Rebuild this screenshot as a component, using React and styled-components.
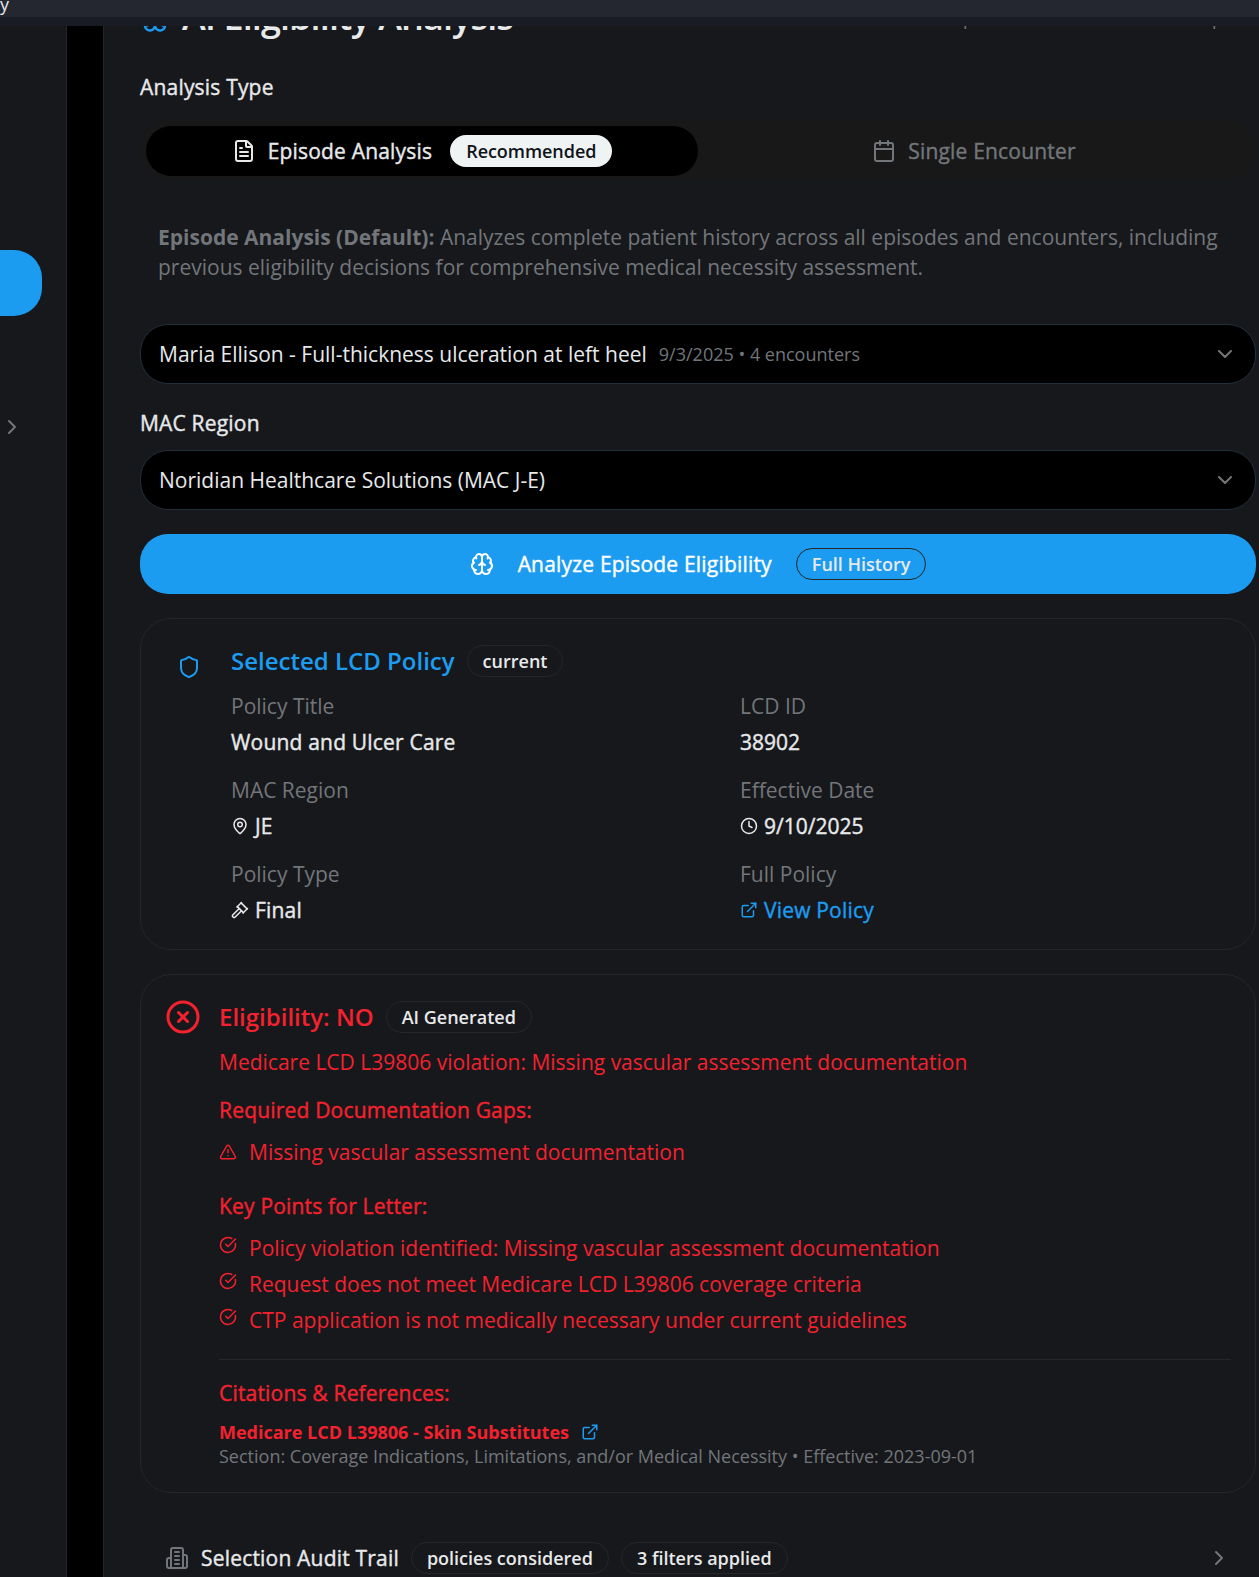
import React from "react";
import styled, { createGlobalStyle, css } from "styled-components";
import {
  Brain,
  FileText,
  Calendar,
  ChevronDown,
  ChevronRight,
  Shield,
  MapPin,
  Clock,
  Gavel,
  ExternalLink,
  CircleX,
  TriangleAlert,
  CircleCheckBig,
} from "lucide-react";

const c = {
  background: "#000000",
  foreground: "#e7e9ea",
  card: "#17181c",
  primary: "#1c9cf0",
  secondary: "#f0f3f4",
  secondaryText: "#0f1419",
  muted: "#181818",
  mutedText: "#72767a",
  border: "#242628",
  input: "#22303c",
  destructive: "#f4212e",
};

// Open Sans is installed without a 500 cut, so the regular cut is thickened.
const medium = css`
  font-weight: 400;
  letter-spacing: ${(p) => (p.$numeric ? 0 : 0.19)}px;
  -webkit-text-stroke: 0.4px currentColor;
`;

const GlobalStyle = createGlobalStyle`
  * { box-sizing: border-box; }
  html, body { margin: 0; background: ${c.background}; }
  body { overflow: hidden; }
  p, h1, h2, h3, ul { margin: 0; padding: 0; font-weight: inherit; font-size: inherit; }
  ul { list-style: none; }
  button { font: inherit; color: inherit; border: 0; background: none; padding: 0; }
  svg { display: block; flex: none; }
`;

const Screen = styled.div`
  display: flex;
  flex-direction: column;
  width: 100vw;
  height: 100vh;
  overflow: hidden;
  color: ${c.foreground};
  font-family: "Open Sans", "Noto Sans", sans-serif;
  font-size: 21px;
  line-height: 30px;
`;

const TitleBar = styled.header`
  display: flex;
  align-items: flex-end;
  flex: none;
  height: 17px;
  padding-bottom: 3px;
  overflow: hidden;
  background: #242730;
  line-height: 20px;
  font-size: 18px;
`;

const ToolStrip = styled.div`
  flex: none;
  height: 9px;
  background: #191c24;
`;

const Body = styled.div`
  display: flex;
  flex: 1;
  min-height: 0;
`;

const Sidebar = styled.aside`
  display: flex;
  flex-direction: column;
  align-items: flex-start;
  flex: none;
  width: 67px;
  padding-top: 224px;
  background: ${c.card};
  border-right: 1px solid ${c.border};
`;

const SidebarItem = styled.button`
  width: 42px;
  height: 66px;
  margin-bottom: 99px;
  border-radius: 0 28px 28px 0;
  background: ${c.primary};
`;

const SidebarToggle = styled.button`
  color: ${c.mutedText};
`;

const Panel = styled.main`
  display: flex;
  flex-direction: column;
  justify-content: flex-end;
  flex: none;
  width: 1189px;
  height: 1551px;
  margin-left: 36px;
  padding: 0 36px 3px;
  background: ${c.card};
  border-left: 1px solid ${c.border};
  overflow: hidden;
`;

const Column = styled.div`
  display: flex;
  flex-direction: column;
  gap: 24px;
  width: 1116px;
`;

const PanelHeader = styled.div`
  display: flex;
  align-items: center;
  gap: 12px;
  height: 50px;
  margin-bottom: 6px;
  color: ${c.primary};
  & > svg { margin-top: 2px; }
`;

const PanelTitle = styled.h1`
  flex: 1;
  color: ${c.foreground};
  font-size: 36px;
  font-weight: 600;
  letter-spacing: -0.9px;
  line-height: 50px;
`;

const HeaderHint = styled.span`
  width: 237px;
  padding-top: 2px;
  color: ${c.mutedText};
  font-size: 18px;
  line-height: 24px;
  &:last-child { width: 44px; }
`;

const Field = styled.div`
  display: flex;
  flex-direction: column;
  gap: ${(p) => p.$gap || 12}px;
`;

const Label = styled.div`
  ${medium}
`;

const TabList = styled.div`
  display: grid;
  grid-template-columns: 1fr 1fr;
  height: 60px;
  padding: 6px;
  padding-bottom: 4px;
  border-radius: 31px;
  background: ${c.muted};
`;

const Tab = styled.button`
  display: flex;
  align-items: center;
  justify-content: center;
  gap: 12px;
  height: 50px;
  border-radius: 25px;
  ${medium}
  color: ${(p) => (p.$active ? c.foreground : c.mutedText)};
  background: ${(p) => (p.$active ? c.background : "transparent")};
`;

const badgeKinds = {
  solid: css`
    color: ${c.secondaryText};
    background: ${c.secondary};
    border-color: transparent;
    letter-spacing: -0.05px;
  `,
  outline: css`
    color: ${c.foreground};
    border-color: ${c.border};
  `,
};

const Badge = styled.span`
  flex: none;
  padding: 3px 15px;
  border: 1px solid;
  border-radius: 16px;
  font-size: 18px;
  font-weight: 600;
  letter-spacing: 0;
  line-height: 24px;
  white-space: nowrap;
  -webkit-text-stroke: 0;
  margin-left: ${(p) => p.$indent || 0}px;
  ${(p) => badgeKinds[p.$kind || "outline"]}
`;

const Notice = styled.p`
  padding: 18px;
  border-radius: 28px;
  color: ${c.mutedText};
`;

const Select = styled.button`
  display: flex;
  align-items: center;
  gap: 12px;
  height: 60px;
  padding: 0 18px;
  border: 1px solid ${c.input};
  border-radius: 28px;
  background: ${c.background};
  text-align: left;
  & > svg { margin-left: auto; color: ${c.foreground}; opacity: 0.5; }
`;

const Small = styled.span`
  display: block;
  color: ${c.mutedText};
  font-size: 18px;
  line-height: 24px;
`;

const PrimaryButton = styled.button`
  display: flex;
  align-items: center;
  justify-content: center;
  gap: 24px;
  height: 60px;
  border-radius: 28px;
  background: ${c.primary};
  color: #ffffff;
  ${medium}
`;

const Card = styled.section`
  display: flex;
  align-items: flex-start;
  gap: 18px;
  padding: 24px;
  border: 1px solid ${c.border};
  border-radius: 31px;
`;

const CardIcon = styled.div`
  flex: none;
  padding: ${(p) => p.$pad || 0}px;
  color: ${(p) => p.$color};
`;

const CardBody = styled.div`
  display: flex;
  flex-direction: column;
  flex: 1;
  gap: 12px;
`;

const HeadingRow = styled.div`
  display: flex;
  align-items: center;
  gap: 12px;
  color: ${(p) => p.$color};
`;

const Heading = styled.h2`
  font-size: 24px;
  font-weight: 600;
  line-height: 36px;
`;

const Facts = styled.div`
  display: grid;
  grid-template-columns: 1fr 1fr;
  gap: 18px;
`;

const Fact = styled.div`
  display: flex;
  flex-direction: column;
  gap: 6px;
`;

const FactName = styled.div`
  color: ${c.mutedText};
`;

const FactValue = styled.div`
  display: flex;
  align-items: center;
  gap: 6px;
  ${medium}
  color: ${(p) => (p.$link ? c.primary : c.foreground)};
`;

const Verdict = styled.div`
  display: flex;
  flex-direction: column;
  gap: 24px;
  color: ${c.destructive};
`;

const Group = styled.div`
  display: flex;
  flex-direction: column;
  gap: 12px;
`;

const Summary = styled.p`
  margin-bottom: -6px;
`;

const GroupTitle = styled.h3`
  && { ${medium} }
`;

const Points = styled.ul`
  display: flex;
  flex-direction: column;
  gap: 6px;
`;

const Point = styled.li`
  display: flex;
  align-items: flex-start;
  gap: 12px;
  & > svg { margin-top: ${(p) => p.$drop}px; }
`;

const Citations = styled(Group)`
  padding-top: 18px;
  border-top: 1px solid ${c.border};
`;

const CitationTitle = styled.div`
  display: flex;
  align-items: center;
  gap: 12px;
  font-size: 18px;
  font-weight: 700;
  line-height: 24px;
  & > svg { color: ${c.primary}; }
`;

const AuditRow = styled.button`
  display: flex;
  align-items: center;
  gap: 12px;
  padding: 25px;
  padding-bottom: 0;
  ${medium}
  & > svg { color: ${c.mutedText}; }
  & > svg:last-child { margin-left: auto; }
`;

function OfficeIcon() {
  return (
    <svg width="24" height="24" viewBox="0 0 24 24" fill="none" stroke="currentColor" strokeWidth="2" strokeLinecap="round" strokeLinejoin="round">
      <path d="M6 22V4a2 2 0 0 1 2-2h8a2 2 0 0 1 2 2v18Z" />
      <path d="M6 12H4a2 2 0 0 0-2 2v6a2 2 0 0 0 2 2h2" />
      <path d="M18 9h2a2 2 0 0 1 2 2v9a2 2 0 0 1-2 2h-2" />
      <path d="M10 6h4M10 10h4M10 14h4M10 18h4" />
    </svg>
  );
}

const facts = [
  { name: "Policy Title", value: "Wound and Ulcer Care" },
  { name: "LCD ID", value: "38902", numeric: true },
  { name: "MAC Region", value: "JE", icon: MapPin },
  { name: "Effective Date", value: "9/10/2025", icon: Clock, numeric: true },
  { name: "Policy Type", value: "Final", icon: Gavel },
  { name: "Full Policy", value: "View Policy", icon: ExternalLink, link: true },
];

const keyPoints = [
  "Policy violation identified: Missing vascular assessment documentation",
  "Request does not meet Medicare LCD L39806 coverage criteria",
  "CTP application is not medically necessary under current guidelines",
];

export default function App() {
  return (
    <Screen>
      <GlobalStyle />
      <TitleBar>y</TitleBar>
      <ToolStrip />
      <Body>
        <Sidebar>
          <SidebarItem />
          <SidebarToggle>
            <ChevronRight size={24} />
          </SidebarToggle>
        </Sidebar>
        <Panel>
          <Column>
            <PanelHeader>
              <Brain size={30} />
              <PanelTitle>AI Eligibility Analysis</PanelTitle>
              <HeaderHint>p</HeaderHint>
              <HeaderHint>p</HeaderHint>
            </PanelHeader>

            <Field $gap={18}>
              <Label>Analysis Type</Label>
              <TabList>
                <Tab $active>
                  <FileText size={24} />
                  Episode Analysis
                  <Badge $kind="solid" $indent={6}>Recommended</Badge>
                </Tab>
                <Tab>
                  <Calendar size={24} />
                  Single Encounter
                </Tab>
              </TabList>
            </Field>

            <Notice>
              <strong>Episode Analysis (Default):</strong> Analyzes complete patient history across all
              episodes and encounters, including previous eligibility decisions for comprehensive
              medical necessity assessment.
            </Notice>

            <Select>
              <span>Maria Ellison - Full-thickness ulceration at left heel</span>
              <Small>9/3/2025 • 4 encounters</Small>
              <ChevronDown size={24} />
            </Select>

            <Field>
              <Label>MAC Region</Label>
              <Select>
                <span>Noridian Healthcare Solutions (MAC J-E)</span>
                <ChevronDown size={24} />
              </Select>
            </Field>

            <PrimaryButton>
              <Brain size={24} />
              Analyze Episode Eligibility
              <Badge>Full History</Badge>
            </PrimaryButton>

            <Card>
              <CardIcon $pad={12} $color={c.primary}>
                <Shield size={24} />
              </CardIcon>
              <CardBody>
                <HeadingRow $color={c.primary}>
                  <Heading>Selected LCD Policy</Heading>
                  <Badge>current</Badge>
                </HeadingRow>
                <Facts>
                  {facts.map(({ name, value, icon: Icon, link, numeric }) => (
                    <Fact key={name}>
                      <FactName>{name}</FactName>
                      <FactValue $link={link} $numeric={numeric}>
                        {Icon && <Icon size={18} />}
                        {value}
                      </FactValue>
                    </Fact>
                  ))}
                </Facts>
              </CardBody>
            </Card>

            <Card>
              <CardIcon $color={c.destructive}>
                <CircleX size={36} />
              </CardIcon>
              <CardBody>
                <HeadingRow $color={c.destructive}>
                  <Heading>Eligibility: NO</Heading>
                  <Badge>AI Generated</Badge>
                </HeadingRow>
                <Verdict>
                  <Summary>Medicare LCD L39806 violation: Missing vascular assessment documentation</Summary>
                  <Group>
                    <GroupTitle>Required Documentation Gaps:</GroupTitle>
                    <Points>
                      <Point $drop={6}>
                        <TriangleAlert size={18} />
                        Missing vascular assessment documentation
                      </Point>
                    </Points>
                  </Group>
                  <Group>
                    <GroupTitle>Key Points for Letter:</GroupTitle>
                    <Points>
                      {keyPoints.map((text) => (
                        <Point key={text} $drop={3}>
                          <CircleCheckBig size={18} />
                          {text}
                        </Point>
                      ))}
                    </Points>
                  </Group>
                  <Citations>
                    <GroupTitle>Citations &amp; References:</GroupTitle>
                    <div>
                      <CitationTitle>
                        Medicare LCD L39806 - Skin Substitutes
                        <ExternalLink size={18} />
                      </CitationTitle>
                      <Small>
                        Section: Coverage Indications, Limitations, and/or Medical Necessity • Effective: 2023-09-01
                      </Small>
                    </div>
                  </Citations>
                </Verdict>
              </CardBody>
            </Card>

            <AuditRow>
              <OfficeIcon />
              Selection Audit Trail
              <Badge>policies considered</Badge>
              <Badge>3 filters applied</Badge>
              <ChevronRight size={24} />
            </AuditRow>
          </Column>
        </Panel>
      </Body>
    </Screen>
  );
}
